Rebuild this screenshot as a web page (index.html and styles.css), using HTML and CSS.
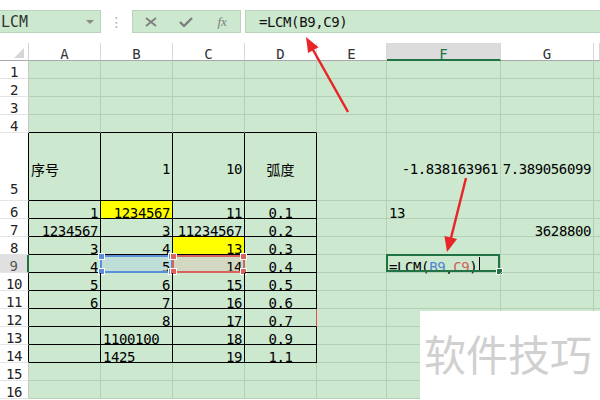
FILE: index.html
```html
<!DOCTYPE html>
<html lang="zh">
<head>
<meta charset="utf-8">
<title>LCM</title>
<link rel="stylesheet" href="styles.css">
</head>
<body>
<div class="app">
  <div class="toolbar">
    <div class="namebox"><span>LCM</span><span class="dd"></span></div>
    <div class="sep">⋮</div>
    <div class="btns">
      <span class="btn"><svg width="12" height="10" viewBox="0 0 12 10"><path d="M1 1 L11 9 M11 1 L1 9" stroke="#7d7d7d" stroke-width="1.8" fill="none"/></svg></span>
      <span class="btn"><svg width="14" height="10" viewBox="0 0 14 10"><path d="M1 5 L5 9 L13 1" stroke="#7d7d7d" stroke-width="2.4" fill="none"/></svg></span>
      <span class="btn fx">fx</span>
    </div>
    <div class="fbar">=LCM(B9,C9)</div>
  </div>

  <div class="sheet">
    <div class="ch corner"><svg width="10" height="10" viewBox="0 0 10 10"><polygon points="10,0 10,10 0,10" fill="#d6d6d6"/></svg></div>
    <div class="ch">A</div><div class="ch">B</div><div class="ch">C</div><div class="ch">D</div><div class="ch">E</div><div class="ch sel">F</div><div class="ch">G</div><div class="ch"></div>

    <div class="rh">1</div><div class="c"></div><div class="c"></div><div class="c"></div><div class="c"></div><div class="c"></div><div class="c"></div><div class="c"></div><div class="c"></div>
    <div class="rh">2</div><div class="c"></div><div class="c"></div><div class="c"></div><div class="c"></div><div class="c"></div><div class="c"></div><div class="c"></div><div class="c"></div>
    <div class="rh">3</div><div class="c"></div><div class="c"></div><div class="c"></div><div class="c"></div><div class="c"></div><div class="c"></div><div class="c"></div><div class="c"></div>
    <div class="rh">4</div><div class="c tb"></div><div class="c tb"></div><div class="c tb"></div><div class="c tb"></div><div class="c"></div><div class="c"></div><div class="c"></div><div class="c"></div>

    <div class="rh tk r5h">5</div><div class="c t l r5"><span class="cjk">序号</span></div><div class="c t r r5">1</div><div class="c t r r5">10</div><div class="c t m r5"><span class="cjk">弧度</span></div><div class="c r5"></div><div class="c r r5">-1.838163961</div><div class="c r r5">7.389056099</div><div class="c r5"></div>

    <div class="rh tk">6</div><div class="c t r">1</div><div class="c t r y">1234567</div><div class="c t r">11</div><div class="c t m">0.1</div><div class="c"></div><div class="c l">13</div><div class="c"></div><div class="c"></div>
    <div class="rh tk">7</div><div class="c t r">1234567</div><div class="c t r">3</div><div class="c t r">11234567</div><div class="c t m">0.2</div><div class="c"></div><div class="c"></div><div class="c r">3628800</div><div class="c"></div>
    <div class="rh tk">8</div><div class="c t r">3</div><div class="c t r">4</div><div class="c t r y">13</div><div class="c t m">0.3</div><div class="c"></div><div class="c"></div><div class="c"></div><div class="c"></div>
    <div class="rh tk rsel">9</div><div class="c t r">4</div><div class="c t r ref-b">5<span class="hl hl-b"><i class="k k1"></i><i class="k k2"></i><i class="k k3"></i><i class="k k4"></i></span></div><div class="c t r ref-c">14<span class="hl hl-c"><i class="k k1"></i><i class="k k2"></i><i class="k k3"></i><i class="k k4"></i></span></div><div class="c t m">0.4</div><div class="c"></div><div class="c l edit">=LCM(<span class="fb">B9</span>,<span class="fc">C9</span>)<span class="caret"></span><span class="active"><i class="handle"></i></span></div><div class="c"></div><div class="c"></div>
    <div class="rh tk">10</div><div class="c t r">5</div><div class="c t r">6</div><div class="c t r">15</div><div class="c t m">0.5</div><div class="c"></div><div class="c"></div><div class="c"></div><div class="c"></div>
    <div class="rh tk">11</div><div class="c t r">6</div><div class="c t r">7</div><div class="c t r">16</div><div class="c t m">0.6</div><div class="c"></div><div class="c"></div><div class="c"></div><div class="c"></div>
    <div class="rh tk">12</div><div class="c t"></div><div class="c t r">8</div><div class="c t r">17</div><div class="c t m redr">0.7</div><div class="c"></div><div class="c"></div><div class="c"></div><div class="c"></div>
    <div class="rh tk">13</div><div class="c t"></div><div class="c t l">1100100</div><div class="c t r">18</div><div class="c t m">0.9</div><div class="c"></div><div class="c"></div><div class="c"></div><div class="c"></div>
    <div class="rh tk">14</div><div class="c t"></div><div class="c t l">1425</div><div class="c t r">19</div><div class="c t m">1.1</div><div class="c"></div><div class="c"></div><div class="c"></div><div class="c"></div>
    <div class="rh">15</div><div class="c"></div><div class="c"></div><div class="c"></div><div class="c"></div><div class="c"></div><div class="c"></div><div class="c"></div><div class="c"></div>
    <div class="rh">16</div><div class="c"></div><div class="c"></div><div class="c"></div><div class="c"></div><div class="c"></div><div class="c"></div><div class="c"></div><div class="c"></div>
  </div>

  <div class="wm">软件技巧</div>

  <svg class="arrows" width="600" height="400" viewBox="0 0 600 400">
    <line x1="348" y1="112" x2="312" y2="48" stroke="#e8262a" stroke-width="2.5"/>
    <polygon points="306,37 318.5,47.2 308.1,53" fill="#e8262a"/>
    <line x1="466" y1="178" x2="451" y2="238" stroke="#e8262a" stroke-width="2.5"/>
    <polygon points="447,252 457,239.1 444.4,235.9" fill="#e8262a"/>
  </svg>
</div>
</body>
</html>
```

FILE: styles.css
```css
* { box-sizing: border-box; margin: 0; padding: 0; }
html, body { width: 600px; height: 400px; overflow: hidden; background: #fff; }
body { font-family: "DejaVu Sans Mono", "Noto Sans CJK SC", monospace; font-size: 14px; color: #000; }

.app { position: relative; width: 600px; height: 400px; }

.toolbar { height: 43px; padding-top: 10px; display: flex; align-items: flex-start; }
.namebox { width: 101px; height: 23px; background: #cce8cf; border: 1px solid #b9d3bc; border-left: none; display: flex; align-items: center; justify-content: space-between; padding: 0 6px 0 1px; color: #333; font-size: 15px; }
.dd { width: 0; height: 0; border-left: 4px solid transparent; border-right: 4px solid transparent; border-top: 4px solid #8a8a8a; }
.sep { width: 31px; height: 23px; display: flex; align-items: center; justify-content: center; color: #b0b0b0; font-size: 14px; font-family: "DejaVu Sans", sans-serif; }
.btns { width: 109px; height: 23px; background: #cce8cf; border: 1px solid #b9d3bc; display: grid; grid-template-columns: 1fr 1fr 1fr; align-items: center; justify-items: center; }
.btn { display: flex; align-items: center; }
.fx { font-family: "Liberation Serif", serif; font-style: italic; font-size: 13px; color: #7d7d7d; }
.fbar { flex: 1; margin-left: 4px; height: 23px; background: #cce8cf; border: 1px solid #b9d3bc; border-right: none; padding-left: 13px; display: flex; align-items: center; letter-spacing: -0.4px; color: #111; }

.sheet { display: grid; grid-template-columns: 29px 72px 72px 72px 72px 70px 114px 93px 6px; grid-template-rows: 18px 18px 18px 18px 18px 68px repeat(11, 18px); background: #cce8cf; }

.ch { background: #fff; border-right: 1px solid #d8d8d8; border-bottom: 1px solid #a9a9a9; display: flex; align-items: flex-end; justify-content: center; line-height: 10px; color: #333; padding-bottom: 1px; }
.ch.corner { justify-content: flex-end; padding: 0 4px 2px 0; border-right-color: #d0d0d0; }
.ch.sel { background: #dcdcdc; color: #217346; border-bottom: 2px solid #217346; padding-bottom: 0; }

.rh { background: #fff; border-right: 1px solid #c8c8c8; border-bottom: 1px solid #e4e4e4; display: flex; align-items: flex-end; justify-content: center; line-height: 10px; color: #222; letter-spacing: -0.4px; padding-bottom: 1px; }
.rh.tk { border-right-color: #000; }
.rh.r5h { padding-bottom: 6px; }
.rh.rsel { background: #e0e0e0; color: #555; border-right: 2px solid #217346; }

.c { border-right: 1px solid #b3cfb6; border-bottom: 1px solid #b3cfb6; display: flex; align-items: flex-end; line-height: 10px; padding: 0 3px 0 3px; white-space: nowrap; position: relative; letter-spacing: -0.4px; }
.c.r { justify-content: flex-end; padding-right: 2px; }
.c.l { justify-content: flex-start; padding-left: 2px; }
.c.m { justify-content: center; }
.c.r5 { align-items: center; padding-top: 5px; }
.c.t { border-right-color: #000; border-bottom-color: #000; }
.c.tb { border-bottom-color: #000; }
.c.redr { border-right-color: #e05050; }
.c.y { background: #ffff00; }
.cjk { font-family: "Noto Sans CJK SC", sans-serif; font-size: 14px; letter-spacing: 0; line-height: 10px; }

.ref-b { background: #bfded8; }
.ref-c { background: #d3d8c3; }
.hl { position: absolute; left: -1px; right: -1px; top: 0; bottom: -1px; border: 2px solid #5b8fd9; }
.hl-c { left: -1px; border-color: #d9625f; }
.k { position: absolute; width: 5px; height: 5px; background: #5b8fd9; outline: 1px solid #fff; }
.hl-c .k { background: #d9625f; }
.k1 { left: -3px; top: -3px; }
.k2 { right: -3px; top: -3px; }
.k3 { left: -3px; bottom: -3px; }
.k4 { right: -3px; bottom: -3px; }

.edit { padding-left: 2px; }
.fb { color: #4a86d0; }
.fc { color: #d0605a; }
.caret { display: inline-block; width: 1px; height: 14px; background: #000; margin-left: 2px; align-self: center; }
.active { position: absolute; left: -1px; right: 0; top: -1px; bottom: 0; border: 2px solid #217346; }
.handle { position: absolute; right: -4px; bottom: -4px; width: 5px; height: 5px; background: #217346; outline: 1px solid #fff; }

.wm { position: absolute; left: 420px; top: 311px; width: 180px; height: 89px; background: #fff; color: #d0d0d0; font-family: "Noto Sans CJK SC", sans-serif; font-size: 42px; line-height: 42px; padding: 21px 0 0 4px; white-space: nowrap; }

.arrows { position: absolute; left: 0; top: 0; pointer-events: none; }
```
